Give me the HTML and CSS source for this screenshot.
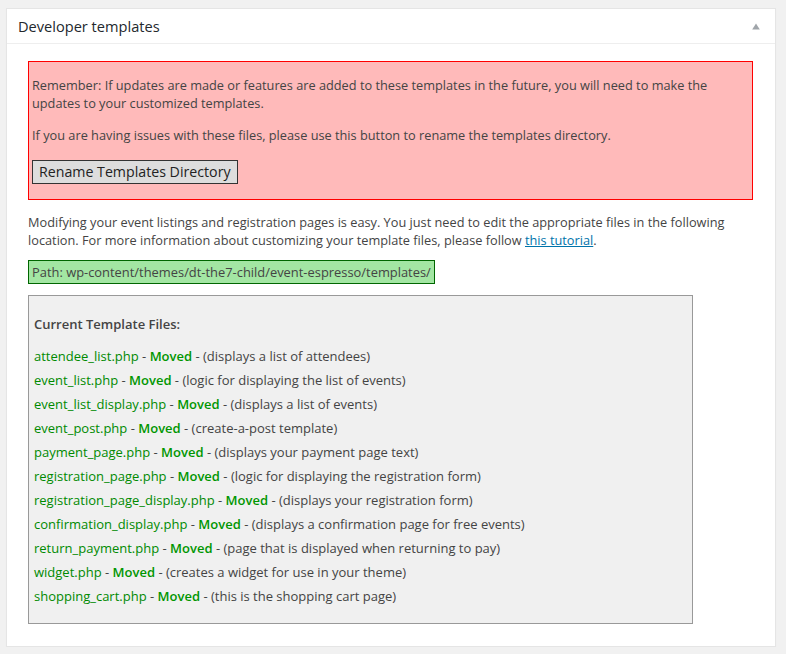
FILE: index.html
```html
<!DOCTYPE html>
<html>
<head>
<meta charset="utf-8">
<link rel="stylesheet" href="styles.css">
</head>
<body>
<div class="postbox">
  <div class="hndle">
    <h3 class="title">Developer templates</h3>
    <svg class="toggle" width="8" height="7" viewBox="0 0 8 7"><path d="M4 0.5 L7.8 6.5 L0.2 6.5 Z" fill="#a0a5aa"/></svg>
  </div>
  <div class="inside">
    <div class="warn">
      <p>Remember: If updates are made or features are added to these templates in the future, you will need to make the updates to your customized templates.</p>
      <p>If you are having issues with these files, please use this button to rename the templates directory.</p>
      <div class="btnrow"><button class="rename">Rename Templates Directory</button></div>
    </div>
    <p class="intro">Modifying your event listings and registration pages is easy. You just need to edit the appropriate files in the following location. For more information about customizing your template files, please follow <a href="#">this tutorial</a>.</p>
    <div class="pathrow"><span class="path">Path: wp-content/themes/dt-the7-child/event-espresso/templates/</span></div>
    <div class="files">
      <p class="files-head">Current Template Files:</p>
      <ul class="list">
        <li><span class="g">attendee_list.php</span> - <strong class="g">Moved</strong> - (displays a list of attendees)</li>
        <li><span class="g">event_list.php</span> - <strong class="g">Moved</strong> - (logic for displaying the list of events)</li>
        <li><span class="g">event_list_display.php</span> - <strong class="g">Moved</strong> - (displays a list of events)</li>
        <li><span class="g">event_post.php</span> - <strong class="g">Moved</strong> - (create-a-post template)</li>
        <li><span class="g">payment_page.php</span> - <strong class="g">Moved</strong> - (displays your payment page text)</li>
        <li><span class="g">registration_page.php</span> - <strong class="g">Moved</strong> - (logic for displaying the registration form)</li>
        <li><span class="g">registration_page_display.php</span> - <strong class="g">Moved</strong> - (displays your registration form)</li>
        <li><span class="g">confirmation_display.php</span> - <strong class="g">Moved</strong> - (displays a confirmation page for free events)</li>
        <li><span class="g">return_payment.php</span> - <strong class="g">Moved</strong> - (page that is displayed when returning to pay)</li>
        <li><span class="g">widget.php</span> - <strong class="g">Moved</strong> - (creates a widget for use in your theme)</li>
        <li><span class="g">shopping_cart.php</span> - <strong class="g">Moved</strong> - (this is the shopping cart page)</li>
      </ul>
    </div>
  </div>
</div>
</body>
</html>
```

FILE: styles.css
```css
html, body {
  margin: 0;
  padding: 0;
  background: #f1f1f1;
}
body {
  font-family: "Open Sans", "Liberation Sans", sans-serif;
  font-size: 12.75px;
  line-height: 18px;
  color: #444;
  padding: 8px 10px 0 6px;
}
.postbox {
  background: #fff;
  border: 1px solid #e5e5e5;
  box-shadow: 0 1px 1px rgba(0,0,0,0.04);
}
.hndle {
  height: 34px;
  border-bottom: 1px solid #eee;
  display: flex;
  align-items: center;
  justify-content: space-between;
  padding: 0 15px 0 11px;
}
.title {
  margin: 0;
  font-size: 14.6px;
  font-weight: 400;
  color: #23282d;
  line-height: 20px;
}
.toggle {
  display: block;
  margin-top: 1px;
}
.inside {
  padding: 17px 22px 22px 21px;
}
.warn {
  background: #ffbaba;
  border: 1px solid #f00;
  padding: 1px 3px 15px;
}
.warn p {
  margin: 13px 0;
}
.warn p + p {
  margin-top: 14px;
}
.btnrow {
  margin-top: 16px;
}
.rename {
  font-family: "Open Sans", "Liberation Sans", sans-serif;
  font-size: 14.2px;
  line-height: 18px;
  color: #222;
  background: #ddd;
  border: 1px solid #333;
  padding: 2px 6px 2px;
  margin: 0;
  border-radius: 0;
}
.intro {
  margin: 13px 0 0;
}
.intro a {
  color: #0073aa;
}
.pathrow {
  margin-top: 11px;
}
.path {
  display: inline-block;
  font-size: 12.9px;
  background: #a3e6a3;
  border: 1px solid #060;
  padding: 2px 3px;
}
.files {
  margin-top: 11px;
  width: 658px;
  background: #f0f0f0;
  border: 1px solid #999;
  padding: 19px 0 15px 5px;
}
.files-head {
  margin: 0 0 11px;
  font-weight: 600;
  font-size: 13px;
}
.list {
  list-style: none;
  margin: 0;
  padding: 0;
  font-size: 13px;
}
.list li {
  line-height: 24px;
}
.g {
  color: #008a00;
}
strong.g {
  font-weight: 600;
  color: #009600;
}
```
